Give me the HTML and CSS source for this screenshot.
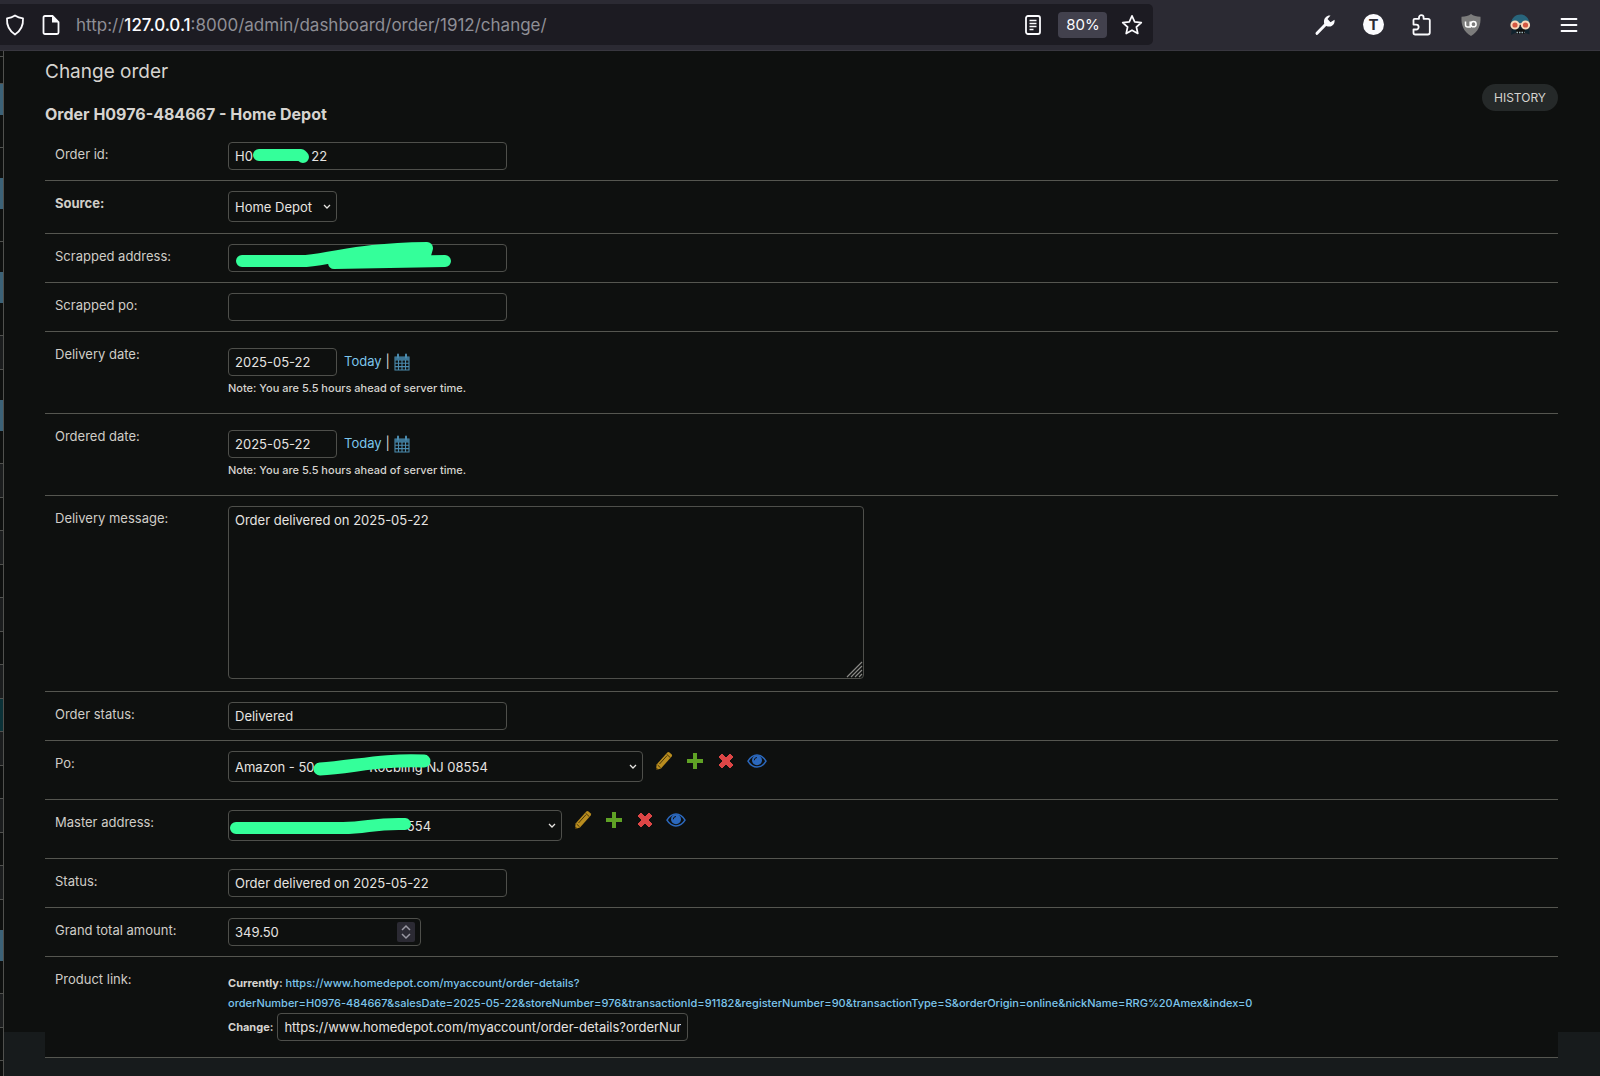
FILE: index.html
```html
<!DOCTYPE html>
<html lang="en">
<head>
    <meta charset="UTF-8">
    <meta name="viewport" content="width=device-width, initial-scale=1.0">
    <title>Change order</title>
    <link rel="stylesheet" href="styles.css">
</head>
<body>
    <!-- shared icons -->
    <svg class="sprite" width="0" height="0" aria-hidden="true">
        <symbol id="calendar" viewBox="0 0 16 18">
            <path d="M1 4h14v13H1zM1 7h14M1 10.300h14M1 13.600h14M4.500 7v10M8 7v10M11.500 7v10" fill="none" stroke="#4b8bae" stroke-width="1.100"/>
            <path d="M1 4h14v3H1z" fill="#3b7595"/>
            <path d="M4 1.500v3M12 1.500v3" stroke="#4b8bae" stroke-width="2" stroke-linecap="round"/>
        </symbol>
        <symbol id="pencil" viewBox="0 0 18 20">
            <path d="M1 19l.6-5.500L12.300 1.600q1-1 2.200-.1l2 1.700q1.100 1 .2 2.200L6 17.500z" fill="#b98d1f"/>
            <path d="M4.500 13L12 4.700M11.600 3.200l3.800 3.500M2.600 14l3 2.800" stroke="#4a370a" stroke-width="1" fill="none"/>
            <path d="M1 19l.3-2.500 2 1.900z" fill="#3b2c08"/>
        </symbol>
        <symbol id="plus" viewBox="0 0 16 16">
            <path d="M6 0h4v6h6v4h-6v6H6v-6H0V6h6z" fill="#5fa225"/>
        </symbol>
        <symbol id="cross" viewBox="0 0 16 16">
            <path d="M4 1l4 4 4-4 3 3-4 4 4 4-3 3-4-4-4 4-3-3 4-4-4-4z" fill="#dd4646" stroke="#dd4646" stroke-linejoin="round"/>
        </symbol>
        <symbol id="eye" viewBox="0 0 20 14">
            <path d="M1 7.200C3.300 3.200 6.300 1 10 1s6.700 2.200 9 6.200C16.700 11 13.700 13 10 13S3.300 11 1 7.200z" fill="none" stroke="#2b68bd" stroke-width="1.500"/>
            <circle cx="10" cy="6.200" r="5" fill="#2b68bd"/>
            <path d="M7.300 6.300A2.800 2.800 0 0 1 10 3.500" fill="none" stroke="#0e100f" stroke-width="1"/>
        </symbol>
    </svg>

    <header class="toolbar">
        <div class="urlbar">
            <svg class="icon" viewBox="0 0 22 22"><path d="M11 1.500c2.300 1.500 5 2.400 8 2.800.4 6.500-2.200 12.500-8 16.200-5.800-3.700-8.400-9.700-8-16.200 3-.4 5.700-1.300 8-2.800z" fill="none" stroke="#fbfbfe" stroke-width="1.800" stroke-linejoin="round"/></svg>
            <svg class="icon file" viewBox="0 0 22 22"><path d="M5 2h7.500L18.500 8v10.500q0 1.500-1.500 1.500H5q-1.500 0-1.500-1.500v-15Q3.500 2 5 2z" fill="none" stroke="#fbfbfe" stroke-width="1.800"/><path d="M12 2v6.500h6.500z" fill="#fbfbfe"/></svg>
            <span class="address">http://<b>127.0.0.1</b>:8000/admin/dashboard/order/1912/change/</span>
            <button class="tool" type="button" aria-label="Reader view"><svg class="icon" viewBox="0 0 22 22"><rect x="4" y="2" width="14" height="18" rx="2" fill="none" stroke="#fbfbfe" stroke-width="1.800"/><path d="M7.500 6.500h7M7.500 9.500h7M7.500 12.500h7M7.500 15.500h4" stroke="#fbfbfe" stroke-width="1.500"/></svg></button>
            <button class="zoom-level" type="button">80%</button>
            <button class="tool" type="button" aria-label="Bookmark"><svg class="icon" viewBox="0 0 22 22"><path d="M11 1.800l2.700 6 6.600.8-4.900 4.400 1.400 6.500L11 16.200l-5.800 3.300L6.600 13 1.700 8.600l6.600-.8z" fill="none" stroke="#fbfbfe" stroke-width="1.700" stroke-linejoin="round"/></svg></button>
        </div>
        <nav class="extensions">
            <button class="tool" type="button" aria-label="Tools"><svg class="icon" viewBox="0 0 22 22"><path d="M3 19.300L12.500 9.500" stroke="#fbfbfe" stroke-width="3" stroke-linecap="round"/><path d="M16.500 1.500l-3 3.500 3 3.300 4-2.600c.7 3.700-1.700 6.800-5.300 6.800-3.400 0-5.600-2.400-5.200-5.600.3-3.200 3-5.900 6.500-5.400z" fill="#fbfbfe"/></svg></button>
            <button class="tool" type="button" aria-label="T extension"><span class="badge-t">T</span></button>
            <button class="tool" type="button" aria-label="Extensions"><svg class="icon" viewBox="0 0 22 22"><path d="M2.500 8.500V6q0-1.200 1.200-1.200H8V3.500a2.300 2.300 0 0 1 4.600 0v1.300H17q1.800 0 1.800 1.800V18.500q0 2-2 2H4.300q-1.800 0-1.800-1.800v-3.200h2.700a2.400 2.400 0 0 0 0-4.900H2.500z" fill="none" stroke="#fbfbfe" stroke-width="1.800" stroke-linejoin="round"/></svg></button>
            <button class="tool" type="button" aria-label="uBlock"><svg class="icon" viewBox="0 0 22 22"><path d="M11 0c2.500 1.800 5.500 2.700 9.500 2.700C21 11 18.500 17.500 11 22 3.500 17.500 1 11 1.500 2.700 5.500 2.700 8.500 1.800 11 0z" fill="#7c7c7c"/><path d="M5.500 7.500v3.200q0 2.300 2.300 2.300h2.400V7.500" fill="none" stroke="#fff" stroke-width="1.500"/><circle cx="13.500" cy="10.200" r="2.600" fill="none" stroke="#fff" stroke-width="1.500"/></svg></button>
            <button class="tool" type="button" aria-label="Spy"><svg class="icon" viewBox="0 0 22 22"><path d="M2 9C3 3.500 6.500.5 11.500.5S20 4 20.500 9z" fill="#28657c"/><path d="M3 13h17l.5 7.500-4-1.500H6l-4 2z" fill="#10222d"/><path d="M7 15h9v5H7z" fill="#111"/><path d="M7.500 18.500h8" stroke="#9fb8c0" stroke-width="1.500" stroke-dasharray="1.500 1"/><circle cx="6" cy="11" r="3.600" fill="#d45843" stroke="#f6d9bb" stroke-width="2"/><circle cx="16.500" cy="11" r="3.600" fill="#d45843" stroke="#f6d9bb" stroke-width="2"/><path d="M9.500 10h3.500" stroke="#f6d9bb" stroke-width="1.500"/></svg></button>
            <button class="tool" type="button" aria-label="Menu"><svg class="icon" viewBox="0 0 22 22"><path d="M3.500 5h15M3.500 11h15M3.500 17h15" stroke="#fbfbfe" stroke-width="1.800" stroke-linecap="round"/></svg></button>
        </nav>
    </header>

    <div class="page">
        <!-- edge of the collapsed sidebar -->
        <aside class="sidebar">
            <i class="gap"></i><i class="head"></i><i class="cap"></i><i></i><i class="short"></i>
            <i class="cap"></i><i></i><i class="short"></i>
            <i class="cap"></i><i></i><i class="odd"></i><i class="short"></i>
            <i class="cap"></i><i></i><i class="odd"></i><i></i><i class="odd"></i>
            <i></i><i class="odd"></i><i></i><i class="odd"></i><i class="current"></i><i class="odd"></i><i></i>
            <i class="odd"></i><i></i><i class="odd"></i><i class="short"></i>
            <i class="cap"></i><i></i><i class="odd"></i><i></i><i class="rest"></i>
        </aside>

        <div class="side-content">
            <main class="content">
                <div class="heading">
                    <div>
                        <h1>Change order</h1>
                        <h2>Order H0976-484667 - Home Depot</h2>
                    </div>
                    <a class="history" href="#">HISTORY</a>
                </div>

                <form class="module">
                    <div class="form-row">
                        <label for="order-id">Order id:</label>
                        <div class="field">
                            <input class="text" type="text" id="order-id" value="H0&nbsp;&nbsp;&nbsp;&nbsp;&nbsp;&nbsp;&nbsp;&nbsp;&nbsp;&nbsp;&nbsp;&nbsp;&nbsp;&nbsp;&nbsp;&nbsp;22">
                            <svg class="mark" width="280" height="30"><path d="M31 13H73L75 15" stroke-width="12"/></svg>
                        </div>
                    </div>
                    <div class="form-row source-row">
                        <label class="required" for="source">Source:</label>
                        <div class="field">
                            <select class="source" id="source"><option>Home Depot</option></select>
                        </div>
                    </div>
                    <div class="form-row">
                        <label for="scrapped-address">Scrapped address:</label>
                        <div class="field">
                            <input class="text" type="text" id="scrapped-address">
                            <svg class="mark" width="280" height="30"><path d="M14 17H78C115 13 130 5 199 4L197 11L106 19L217 17" stroke-width="12"/></svg>
                        </div>
                    </div>
                    <div class="form-row">
                        <label for="scrapped-po">Scrapped po:</label>
                        <div class="field"><input class="text" type="text" id="scrapped-po"></div>
                    </div>
                    <div class="form-row date-row">
                        <label for="delivery-date">Delivery date:</label>
                        <div class="field">
                            <div class="line">
                                <input class="date" type="text" id="delivery-date" value="2025-05-22">
                                <span class="shortcuts"><a href="#">Today</a> | <a href="#" aria-label="Choose a date"><svg width="16" height="18"><use href="#calendar"/></svg></a></span>
                            </div>
                            <p class="note">Note: You are 5.5 hours ahead of server time.</p>
                        </div>
                    </div>
                    <div class="form-row date-row">
                        <label for="ordered-date">Ordered date:</label>
                        <div class="field">
                            <div class="line">
                                <input class="date" type="text" id="ordered-date" value="2025-05-22">
                                <span class="shortcuts"><a href="#">Today</a> | <a href="#" aria-label="Choose a date"><svg width="16" height="18"><use href="#calendar"/></svg></a></span>
                            </div>
                            <p class="note">Note: You are 5.5 hours ahead of server time.</p>
                        </div>
                    </div>
                    <div class="form-row">
                        <label for="delivery-message">Delivery message:</label>
                        <div class="field message">
                            <textarea id="delivery-message" rows="10">Order delivered on 2025-05-22</textarea>
                            <svg class="grip" width="17" height="17"><path d="M1 16L16 1M5 16L16 5M9 16l7-7M13 16l3-3" stroke="#8a8a86" stroke-width="1.200"/></svg>
                        </div>
                    </div>
                    <div class="form-row">
                        <label for="order-status">Order status:</label>
                        <div class="field"><input class="text" type="text" id="order-status" value="Delivered"></div>
                    </div>
                    <div class="form-row related-row">
                        <label for="po">Po:</label>
                        <div class="field line">
                            <select class="po" id="po"><option>Amazon - 50&nbsp;&nbsp;&nbsp;&nbsp;&nbsp;&nbsp;&nbsp;&nbsp;&nbsp;&nbsp;&nbsp;&nbsp;&nbsp;&nbsp;&nbsp;Roebling NJ 08554</option></select>
                            <svg class="mark" width="280" height="30"><path d="M92 18C125 16 155 8 196 10" stroke-width="13"/></svg>
                            <span class="actions">
                                <a href="#" aria-label="Change po"><svg width="18" height="20"><use href="#pencil"/></svg></a>
                                <a href="#" aria-label="Add po"><svg width="16" height="16"><use href="#plus"/></svg></a>
                                <a href="#" aria-label="Delete po"><svg width="16" height="16"><use href="#cross"/></svg></a>
                                <a href="#" aria-label="View po"><svg width="20" height="14"><use href="#eye"/></svg></a>
                            </span>
                        </div>
                    </div>
                    <div class="form-row related-row">
                        <label for="master-address">Master address:</label>
                        <div class="field line">
                            <select class="master" id="master-address"><option>&nbsp;&nbsp;&nbsp;&nbsp;&nbsp;&nbsp;&nbsp;&nbsp;&nbsp;&nbsp;&nbsp;&nbsp;&nbsp;&nbsp;&nbsp;&nbsp;&nbsp;&nbsp;&nbsp;&nbsp;&nbsp;&nbsp;&nbsp;&nbsp;&nbsp;&nbsp;&nbsp;&nbsp;&nbsp;&nbsp;&nbsp;&nbsp;&nbsp;&nbsp;&nbsp;&nbsp;&nbsp;&nbsp;&nbsp;&nbsp;&nbsp;&nbsp;&nbsp;&nbsp;&nbsp;&nbsp;&nbsp;554</option></select>
                            <svg class="mark" width="280" height="30"><path d="M8 18H115C140 18 145 13 177 14" stroke-width="12"/></svg>
                            <span class="actions">
                                <a href="#" aria-label="Change address"><svg width="18" height="20"><use href="#pencil"/></svg></a>
                                <a href="#" aria-label="Add address"><svg width="16" height="16"><use href="#plus"/></svg></a>
                                <a href="#" aria-label="Delete address"><svg width="16" height="16"><use href="#cross"/></svg></a>
                                <a href="#" aria-label="View address"><svg width="20" height="14"><use href="#eye"/></svg></a>
                            </span>
                        </div>
                    </div>
                    <div class="form-row">
                        <label for="status">Status:</label>
                        <div class="field"><input class="text" type="text" id="status" value="Order delivered on 2025-05-22"></div>
                    </div>
                    <div class="form-row">
                        <label for="amount">Grand total amount:</label>
                        <div class="field number">
                            <input type="number" id="amount" step="0.01" value="349.50">
                            <svg class="spinner" width="18" height="20"><rect width="18" height="20" rx="2" fill="#2b2a33"/><path d="M5 8l4-4 4 4M5 12l4 4 4-4" fill="none" stroke="#9a99a3" stroke-width="1.500"/></svg>
                        </div>
                    </div>
                    <div class="form-row link-row">
                        <label for="product-link">Product link:</label>
                        <div class="field url">
                            <b>Currently:</b> <a href="#">https://www.homedepot.com/myaccount/order-details?<br>orderNumber=H0976-484667&amp;salesDate=2025-05-22&amp;storeNumber=976&amp;transactionId=91182&amp;registerNumber=90&amp;transactionType=S&amp;orderOrigin=online&amp;nickName=RRG%20Amex&amp;index=0</a>
                            <div class="line"><b>Change:</b><input type="url" id="product-link" value="https://www.homedepot.com/myaccount/order-details?orderNumber=H0976-484667"></div>
                        </div>
                    </div>
                </form>
            </main>
        </div>
    </div>
</body>
</html>
```

FILE: styles.css
```css
* {
    box-sizing: border-box;
}

body {
    margin: 0;
    min-height: 100vh;
    display: flex;
    flex-direction: column;
    font-family: Inter, "Liberation Sans", sans-serif;
    font-size: 13px;
    line-height: 20px;
    color: #d6d4d0;
    background: #171b1c;
}

a {
    color: #7cc5ec;
    text-decoration: none;
}

button {
    border: none;
    padding: 0;
    background: none;
    color: inherit;
    font: inherit;
}

.sprite {
    position: absolute;
}

/* Browser toolbar */
.toolbar {
    display: flex;
    justify-content: space-between;
    padding: 4px 20px 5px 0;
    background: #2b2a33;
    border-bottom: 1px solid #38373f;
}

.urlbar {
    display: flex;
    align-items: center;
    width: 73%;
    height: 41px;
    padding: 0 10px 0 4px;
    gap: 14px;
    background: #1c1b22;
    border-radius: 0 5px 5px 0;
}

.icon {
    display: block;
    width: 22px;
    height: 22px;
}

.address {
    flex: 1;
    font-size: 17px;
    color: #8f8f96;
}

.address b {
    font-weight: 500;
    color: #fbfbfe;
}

.zoom-level {
    width: 49px;
    height: 26px;
    border-radius: 4px;
    background: #42414d;
    color: #fbfbfe;
    font-size: 15px;
}

.extensions {
    display: flex;
    align-items: center;
    gap: 27px;
}

.badge-t {
    display: block;
    width: 21px;
    border-radius: 50%;
    background: #fbfbfe;
    color: #2b2a33;
    font-size: 15px;
    font-weight: 700;
    line-height: 21px;
}

/* Sidebar edge */
.page {
    flex: 1;
    display: flex;
}

.sidebar {
    flex: none;
    display: flex;
    flex-direction: column;
    width: 4px;
    border-right: 1px solid #50514e;
    background: #0e100f;
}

.sidebar i {
    height: 33px;
    border-bottom: 1px solid #50514e;
}

.sidebar .gap {
    height: 6px;
}

.sidebar .head {
    height: 27px;
}

.sidebar .short {
    height: 30px;
    border: none;
}

.sidebar .cap {
    height: 31px;
    border: none;
    background: #3c6277;
}

.sidebar .odd {
    height: 34px;
    background: #1b1d1e;
}

.sidebar .current {
    background: #0b3238;
}

.sidebar .rest {
    flex: 1;
    height: auto;
    border: none;
}

/* Content */
.side-content {
    flex: 1;
    min-width: 0;
}

.content {
    display: flow-root;
    padding: 9px 42px 0 41px;
    background: #0e100f;
}

.heading {
    display: flex;
    justify-content: space-between;
    align-items: flex-start;
    padding-bottom: 6px;
}

h1,
h2 {
    margin: 0;
    line-height: 24px;
}

h1 {
    margin-bottom: 18px;
    font-size: 19px;
    font-weight: 400;
}

h2 {
    font-size: 16px;
    font-weight: 700;
}

.history {
    margin-top: 24px;
    padding: 0 12px;
    border-radius: 14px;
    background: #252929;
    color: #d6d4d0;
    font-size: 12px;
    line-height: 27px;
}

/* the module runs past the content background */
.module {
    position: relative;
    margin-bottom: -26px;
    background: #0e100f;
}

.form-row {
    display: flex;
    padding: 10px 0;
    border-bottom: 1px solid #555650;
}

.form-row > label {
    flex: none;
    width: 183px;
    padding: 2px 0 0 10px;
    color: #d0cdc7;
}

.form-row > .required {
    font-weight: 700;
}

.field {
    position: relative;
    flex: 1;
    min-width: 0;
}

.line {
    display: flex;
    align-items: flex-start;
}

input,
select,
textarea {
    display: block;
    margin: 0;
    height: 28px;
    padding: 0 6px;
    border: 1px solid #4e4f4b;
    border-radius: 4px;
    background-color: #0e100f;
    color: #e6e4e1;
    font: inherit;
}

.text {
    width: 279px;
}

select {
    height: 31px;
    appearance: none;
    background-image: url("data:image/svg+xml,%3Csvg xmlns='http://www.w3.org/2000/svg' width='8' height='6'%3E%3Cpath d='M1 1l3 3 3-3' fill='none' stroke='%23e6e4e1' stroke-width='1.300'/%3E%3C/svg%3E");
    background-repeat: no-repeat;
    background-position: right 5px center;
}

.source-row {
    padding-bottom: 11px;
}

.source {
    width: 109px;
}

.po {
    width: 415px;
}

.master {
    width: 334px;
}

/* Marker strokes over private values */
.mark {
    position: absolute;
    top: 0;
    left: 0;
    overflow: visible;
    fill: none;
    stroke: #34ff9a;
    stroke-linecap: round;
    stroke-linejoin: round;
    pointer-events: none;
}

.date-row {
    padding: 16px 0 15px;
}

.date-row > label {
    margin-top: -6px;
}

.date {
    width: 109px;
}

.shortcuts {
    display: flex;
    gap: 4px;
    padding: 3px 0 0 7px;
}

.shortcuts svg {
    display: block;
    margin-top: 2px;
}

.note {
    margin: 2px 0 0;
    font-size: 11px;
    font-weight: 500;
}

.message {
    padding-bottom: 2px;
}

textarea {
    width: 636px;
    height: 173px;
    padding: 3px 6px;
    resize: none;
}

.grip {
    position: absolute;
    top: 155px;
    left: 618px;
}

.related-row {
    padding-bottom: 17px;
}

.actions {
    display: flex;
    gap: 10px;
    padding-left: 10px;
}

.actions a {
    display: flex;
    align-items: center;
    justify-content: center;
    width: 21px;
    height: 20px;
}

.number input {
    width: 193px;
    appearance: textfield;
}

.number input::-webkit-inner-spin-button {
    appearance: none;
}

.spinner {
    position: absolute;
    top: 4px;
    left: 169px;
}

.link-row {
    padding: 16px 0;
}

.link-row > label {
    margin-top: -6px;
}

.url {
    font-size: 11px;
    font-weight: 500;
}

.url .line {
    align-items: center;
}

.url input {
    width: 411px;
    margin-left: 4px;
    font-size: 13px;
    font-weight: 400;
}
```
